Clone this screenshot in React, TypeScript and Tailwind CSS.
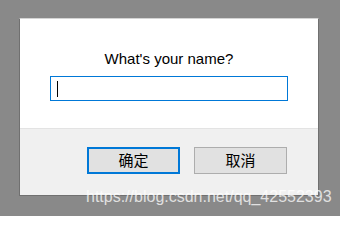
export default function App() {
  return (
    <div className="relative w-[340px] h-[216px] overflow-hidden bg-[#898989] pt-[18px] pl-[19px] font-['Liberation_Sans','Noto_Sans_CJK_SC',sans-serif]">
      {/* dialog */}
      <div className="flex flex-col w-[300px] h-[178px] border border-[#707070] border-t-[#d4d4d4] bg-white">
        <div className="flex flex-col items-center h-[109px] pt-[31px]">
          <div className="text-[15px] leading-[18px] text-black">What's your name?</div>
          <div className="flex items-center mt-[8px] w-[238px] h-[25px] border border-[#0078d7] pl-[6px]">
            <span className="block w-px h-[16px] bg-black" />
          </div>
        </div>
        <div className="flex flex-1 justify-end gap-[14px] border-t border-[#e3e3e3] bg-[#f0f0f0] pt-[18px] pr-[31px]">
          <button className="flex items-center justify-center w-[93px] h-[27px] border-2 border-[#0078d7] bg-[#e1e1e1] text-[15px] text-black font-['Noto_Sans_CJK_SC',sans-serif]">
            确定
          </button>
          <button className="flex items-center justify-center w-[93px] h-[27px] border border-[#adadad] bg-[#e1e1e1] text-[15px] text-black font-['Noto_Sans_CJK_SC',sans-serif]">
            取消
          </button>
        </div>
      </div>
      {/* watermark */}
      <div className="absolute left-[86px] top-[189px] text-[16px] leading-[16px] text-white/75 whitespace-nowrap">
        https://blog.csdn.net/qq_42552393
      </div>
    </div>
  );
}
